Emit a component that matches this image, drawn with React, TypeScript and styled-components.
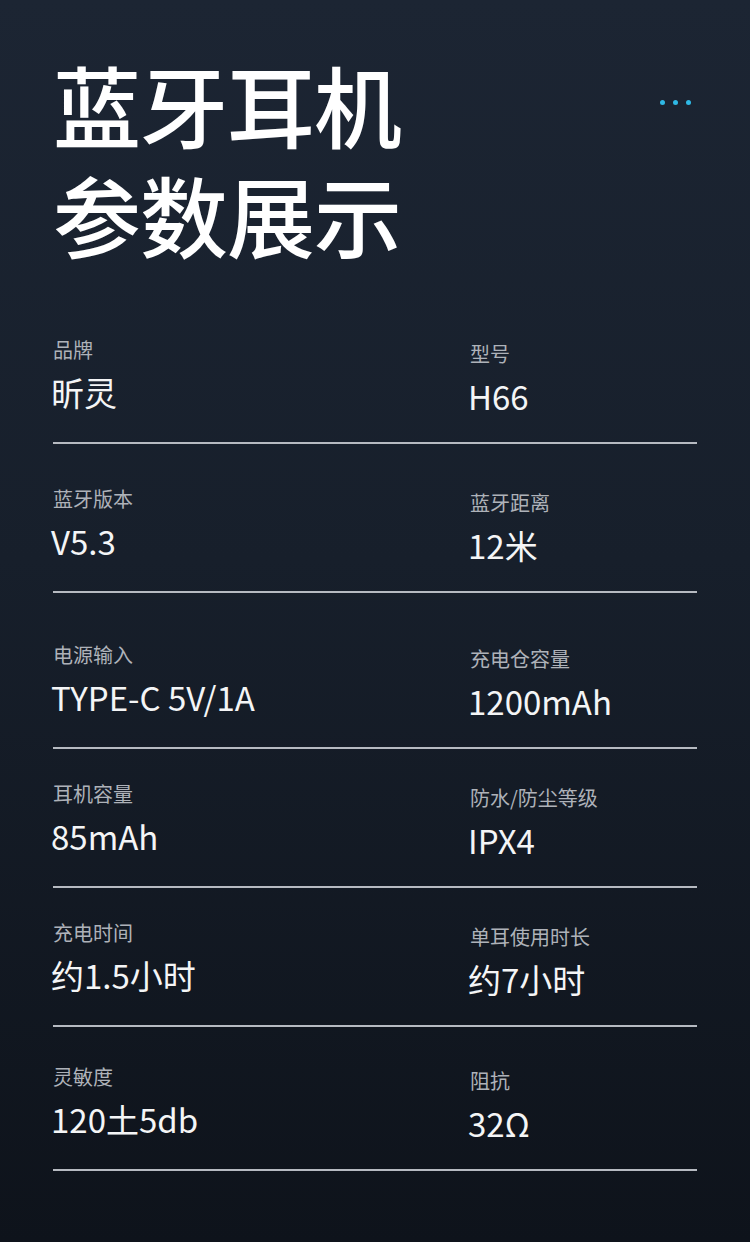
import React from "react";
import styled, { createGlobalStyle } from "styled-components";

const GlobalStyle = createGlobalStyle`
  html, body {
    margin: 0;
    padding: 0;
    background: #0e131b;
  }
  body {
    font-family: "Noto Sans CJK SC", "Noto Sans", sans-serif;
  }
`;

const Page = styled.div`
  width: 750px;
  height: 1242px;
  box-sizing: border-box;
  padding: 48px 53px 0 53px;
  background: linear-gradient(180deg, #1c2533 0%, #171f2b 45%, #0e131b 100%);
  overflow: hidden;
`;

const Header = styled.div`
  display: flex;
  justify-content: space-between;
  align-items: flex-start;
`;

const Title = styled.h1`
  margin: 0;
  color: #ffffff;
  font-size: 88px;
  line-height: 110px;
  font-weight: 500;
  letter-spacing: -1px;
`;

const Dots = styled.div`
  display: flex;
  gap: 8px;
  margin-top: 52px;
  margin-right: 6px;
`;

const Dot = styled.span`
  width: 5px;
  height: 5px;
  border-radius: 50%;
  background: #2fb9e6;
`;

const Specs = styled.div`
  margin-top: 69px;
  display: flex;
  flex-direction: column;
`;

const Row = styled.div<{ $top: number }>`
  display: grid;
  grid-template-columns: 417px 1fr;
  padding: ${(p) => p.$top}px 0 28px 0;
  border-bottom: 2px solid #b6bac1;
`;

const Cell = styled.div<{ $shift?: number }>`
  display: flex;
  flex-direction: column;
  gap: 7px;
  margin-top: ${(p) => p.$shift || 0}px;
  margin-bottom: ${(p) => -(p.$shift || 0)}px;
`;

const Label = styled.div`
  color: #aeb2b9;
  font-size: 20px;
  line-height: 26px;
`;

const Value = styled.div`
  color: #f4f5f6;
  font-size: 33px;
  line-height: 44px;
  margin-left: -2px;
`;

type Spec = { label: string; value: string };

const rows: { top: number; left: Spec; right: Spec }[] = [
  { top: 0, left: { label: "品牌", value: "昕灵" }, right: { label: "型号", value: "H66" } },
  { top: 42, left: { label: "蓝牙版本", value: "V5.3" }, right: { label: "蓝牙距离", value: "12米" } },
  { top: 49, left: { label: "电源输入", value: "TYPE-C 5V/1A" }, right: { label: "充电仓容量", value: "1200mAh" } },
  { top: 32, left: { label: "耳机容量", value: "85mAh" }, right: { label: "防水/防尘等级", value: "IPX4" } },
  { top: 32, left: { label: "充电时间", value: "约1.5小时" }, right: { label: "单耳使用时长", value: "约7小时" } },
  { top: 37, left: { label: "灵敏度", value: "120土5db" }, right: { label: "阻抗", value: "32Ω" } },
];

export default function App() {
  return (
    <>
      <GlobalStyle />
      <Page>
        <Header>
          <Title>
            蓝牙耳机
            <br />
            参数展示
          </Title>
          <Dots>
            <Dot />
            <Dot />
            <Dot />
          </Dots>
        </Header>
        <Specs>
          {rows.map((r, i) => (
            <Row key={i} $top={r.top}>
              <Cell>
                <Label>{r.left.label}</Label>
                <Value>{r.left.value}</Value>
              </Cell>
              <Cell $shift={4}>
                <Label>{r.right.label}</Label>
                <Value>{r.right.value}</Value>
              </Cell>
            </Row>
          ))}
        </Specs>
      </Page>
    </>
  );
}
